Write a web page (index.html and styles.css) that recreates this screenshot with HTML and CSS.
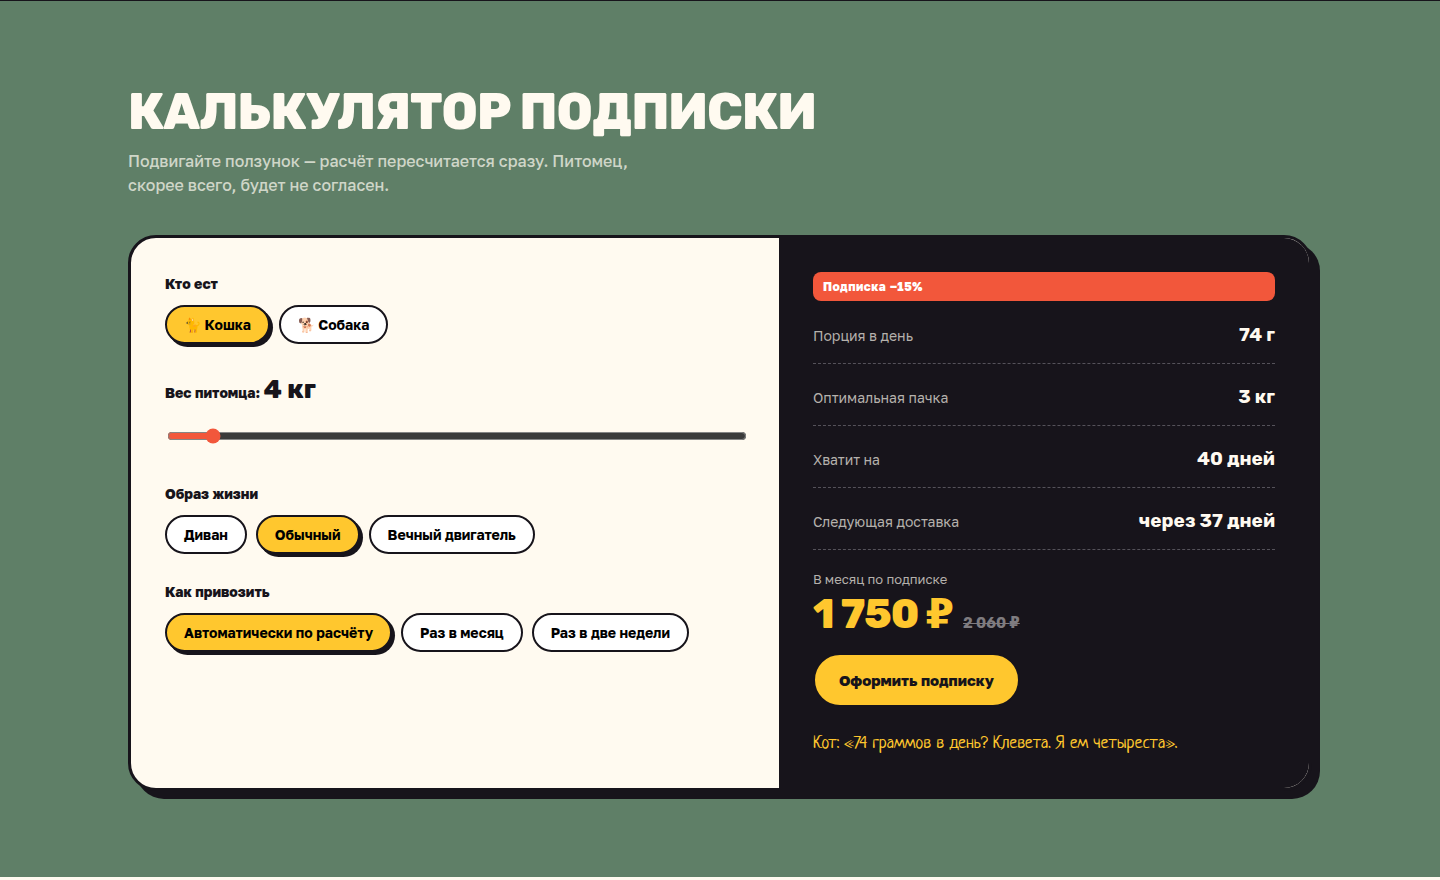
FILE: index.html
```html
<!DOCTYPE html>
<html lang="ru">
<head>
<meta charset="utf-8">
<meta name="viewport" content="width=device-width, initial-scale=1">
<title>Калькулятор подписки</title>
<link rel="stylesheet" href="styles.css">
</head>
<body>
<section class="calc-section">
  <div class="wrap">
    <h2 class="title">Калькулятор подписки</h2>
    <p class="lead">Подвигайте ползунок — расчёт пересчитается сразу. Питомец, скорее всего, будет не согласен.</p>
    <div class="card">
      <div class="form">
        <div class="field" role="group" aria-labelledby="who">
          <div class="label" id="who">Кто ест</div>
          <div class="chips">
            <button type="button" class="chip chip-on" aria-pressed="true">🐈 Кошка</button>
            <button type="button" class="chip" aria-pressed="false">🐕 Собака</button>
          </div>
        </div>
        <div class="field">
          <label class="label label-weight" for="weight">Вес питомца: <output class="weight" for="weight">4 кг</output></label>
          <input class="range" id="weight" type="range" min="1" max="45" value="4">
        </div>
        <div class="field" role="group" aria-labelledby="life">
          <div class="label" id="life">Образ жизни</div>
          <div class="chips">
            <button type="button" class="chip" aria-pressed="false">Диван</button>
            <button type="button" class="chip chip-on" aria-pressed="true">Обычный</button>
            <button type="button" class="chip" aria-pressed="false">Вечный двигатель</button>
          </div>
        </div>
        <div class="field" role="group" aria-labelledby="delivery">
          <div class="label" id="delivery">Как привозить</div>
          <div class="chips">
            <button type="button" class="chip chip-on" aria-pressed="true">Автоматически по расчёту</button>
            <button type="button" class="chip" aria-pressed="false">Раз в месяц</button>
            <button type="button" class="chip" aria-pressed="false">Раз в две недели</button>
          </div>
        </div>
      </div>
      <div class="result">
        <div class="tag">Подписка −15%</div>
        <dl class="rows">
          <div class="row"><dt>Порция в день</dt><dd>74 г</dd></div>
          <div class="row"><dt>Оптимальная пачка</dt><dd>3 кг</dd></div>
          <div class="row"><dt>Хватит на</dt><dd>40 дней</dd></div>
          <div class="row"><dt>Следующая доставка</dt><dd>через 37 дней</dd></div>
        </dl>
        <div class="price-label">В месяц по подписке</div>
        <div class="price"><span class="sum">1 750 <span class="rub">₽</span></span><s class="old">2 060 <span class="rub">₽</span></s></div>
        <button type="button" class="submit">Оформить подписку</button>
        <p class="note">Кот: «74 граммов в день? Клевета. Я ем четыреста».</p>
      </div>
    </div>
  </div>
</section>
</body>
</html>
```
FILE: styles.css
```css
* { box-sizing: border-box; }

body {
  margin: 0;
  background: #fffaf0;
  color: #17141b;
  font-family: "Golos Text", Inter, sans-serif;
  font-size: 16px;
  line-height: 24px;
}

.calc-section {
  padding: 85px 32px 86px;
  border-top: 1px solid #17141b;
  background: #5f7f67;
}

.wrap { max-width: 1184px; margin: 0 auto; }

.title {
  margin: 0;
  color: #fffaf0;
  font-family: Rubik, Inter, sans-serif;
  font-size: 50px;
  font-weight: 800;
  letter-spacing: -1px;
  line-height: 52px;
  text-transform: uppercase;
}

.lead {
  max-width: 520px;
  margin: 11px 0 38px;
  color: #cfd6c8;
  font-weight: 500;
}

.card {
  display: grid;
  grid-template-columns: 11fr 9fr;
  overflow: hidden;
  border: 3px solid #17141b;
  border-radius: 28px;
  background: #fffaf0;
  box-shadow: 8px 8px 0 #17141b;
}

.form, .result { padding: 34px; }

.result { background: #17141b; color: #fffaf0; }

.field { margin-bottom: 26px; }

.label {
  margin-bottom: 10px;
  font-size: 14px;
  font-weight: 800;
  line-height: 23px;
}

.label-weight { display: block; line-height: 40px; }

.weight {
  font-family: Rubik, Inter, sans-serif;
  font-size: 26px;
  font-weight: 800;
}

.range {
  display: block;
  width: 100%;
  margin: 15px 2px 38px;
  accent-color: #f2573b;
}

.chips { display: flex; flex-wrap: wrap; gap: 9px; }

.chip {
  padding: 8px 17px;
  border: 2px solid #17141b;
  border-radius: 20px;
  background: #fff;
  color: #000;
  font-family: inherit;
  font-size: 14px;
  font-weight: 700;
  line-height: 19px;
}

.chip-on { background: #ffc72e; box-shadow: 3px 3px 0 #17141b; }

.tag {
  margin-bottom: 1px;
  padding: 5px 10px;
  border-radius: 8px;
  background: #f2573b;
  color: #fff;
  font-size: 12px;
  font-weight: 800;
  letter-spacing: 0.5px;
  line-height: 19px;
}

.rows { margin: 0 0 18px; }

.row {
  display: flex;
  justify-content: space-between;
  align-items: baseline;
  padding: 17px 0 13px;
  border-bottom: 1px dashed #55525a;
}

.row dt { color: #b5b1ac; font-size: 14px; }

.row dd {
  margin: 0;
  font-family: Rubik, Inter, sans-serif;
  font-size: 19px;
  font-weight: 700;
  line-height: 31px;
}

.price-label { color: #b5b1ac; font-size: 13px; line-height: 22px; }

.price {
  display: flex;
  align-items: baseline;
  gap: 10px;
  font-family: Rubik, Inter, sans-serif;
  line-height: 48px;
}

.sum {
  color: #ffc72e;
  font-size: 41px;
  font-weight: 800;
  letter-spacing: -1px;
}

.old { color: #7f7c80; font-size: 15px; font-weight: 700; }

.rub { font-family: "DejaVu Sans", sans-serif; line-height: 24px; }

.submit {
  margin-top: 6px;
  padding: 12px 24px;
  border: 2px solid #17141b;
  border-radius: 27px;
  background: #ffc72e;
  color: #17141b;
  font-family: inherit;
  font-size: 15px;
  font-weight: 800;
  line-height: 26px;
}

.note {
  margin: 26px 0 0;
  color: #ffc72e;
  font-family: Neucha, "Open Sans", sans-serif;
  font-size: 18px;
  line-height: 21px;
}
```
